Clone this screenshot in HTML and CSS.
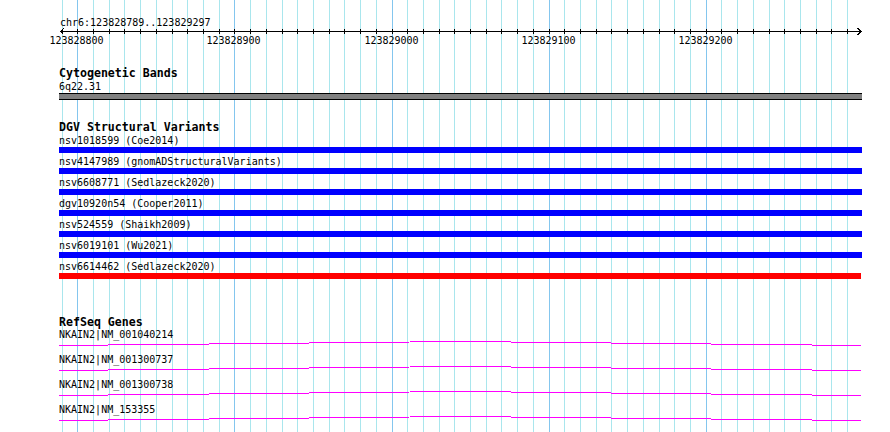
FILE: index.html
```html
<!DOCTYPE html>
<html lang="en">
<head>
  <meta charset="UTF-8">
  <title>chr6:123828789..123829297</title>
  <link rel="stylesheet" href="styles.css">
</head>
<body>
  <div class="view">
    <!-- Grid lines, filled in by the script below -->
    <svg class="grid" id="grid" width="890" height="432"></svg>

    <!-- Ruler -->
    <svg class="ruler" width="890" height="46">
      <text class="range" x="60" y="26">chr6:123828789..123829297</text>
      <line class="axis" x1="60" y1="31.5" x2="861" y2="31.5"/>
      <polyline class="axis" points="63.5,28.5 60.5,31.5 63.5,34.5"/>
      <polyline class="axis" points="857.5,28 861,31.5 857.5,35"/>
      <g id="ticks"></g>
      <text class="pos" x="76.5" y="44">123828800</text>
      <text class="pos" x="233.5" y="44">123828900</text>
      <text class="pos" x="391.5" y="44">123829000</text>
      <text class="pos" x="548.5" y="44">123829100</text>
      <text class="pos" x="705.5" y="44">123829200</text>
    </svg>

    <!-- Cytogenetic bands -->
    <section class="track">
      <h2 class="track-title">Cytogenetic Bands</h2>
      <div class="label">6q22.31</div>
      <div class="band"></div>
    </section>

    <!-- DGV -->
    <section class="track">
      <h2 class="track-title">DGV Structural Variants</h2>
      <div class="variant">
        <div class="label">nsv1018599 (Coe2014)</div>
        <div class="bar"></div>
      </div>
      <div class="variant">
        <div class="label">nsv4147989 (gnomADStructuralVariants)</div>
        <div class="bar"></div>
      </div>
      <div class="variant">
        <div class="label">nsv6608771 (Sedlazeck2020)</div>
        <div class="bar"></div>
      </div>
      <div class="variant">
        <div class="label">dgv10920n54 (Cooper2011)</div>
        <div class="bar"></div>
      </div>
      <div class="variant">
        <div class="label">nsv524559 (Shaikh2009)</div>
        <div class="bar"></div>
      </div>
      <div class="variant">
        <div class="label">nsv6019101 (Wu2021)</div>
        <div class="bar"></div>
      </div>
      <div class="variant">
        <div class="label">nsv6614462 (Sedlazeck2020)</div>
        <div class="bar loss"></div>
      </div>
    </section>

    <!-- RefSeq -->
    <section class="track genes">
      <h2 class="track-title">RefSeq Genes</h2>
      <div class="gene">
        <div class="label">NKAIN2|NM_001040214</div>
        <svg width="803" height="13"><polyline class="intron" points="0,4.5 401,0.5 802,4.5"/></svg>
      </div>
      <div class="gene">
        <div class="label">NKAIN2|NM_001300737</div>
        <svg width="803" height="13"><polyline class="intron" points="0,4.5 401,0.5 802,4.5"/></svg>
      </div>
      <div class="gene">
        <div class="label">NKAIN2|NM_001300738</div>
        <svg width="803" height="13"><polyline class="intron" points="0,4.5 401,0.5 802,4.5"/></svg>
      </div>
      <div class="gene">
        <div class="label">NKAIN2|NM_153355</div>
        <svg width="803" height="13"><polyline class="intron" points="0,4.5 401,0.5 802,4.5"/></svg>
      </div>
    </section>
  </div>

  <script>
    const NS = "http://www.w3.org/2000/svg";
    const grid = document.getElementById("grid");
    const ticks = document.getElementById("ticks");

    // one line every 10bp, a major one every 100bp
    const first = 77.35;
    const step = 15.708;

    for (let k = -1; k <= 49; k++) {
      const x = Math.round(first + step * k);

      const line = document.createElementNS(NS, "rect");
      line.setAttribute("x", x);
      line.setAttribute("y", 0);
      line.setAttribute("width", 1);
      line.setAttribute("height", 432);
      line.setAttribute("class", k % 10 === 0 ? "major" : "minor");
      grid.appendChild(line);

      const tick = document.createElementNS(NS, "rect");
      tick.setAttribute("x", x);
      tick.setAttribute("y", 29);
      tick.setAttribute("width", 1);
      tick.setAttribute("height", 5);
      tick.setAttribute("class", "tick");
      ticks.appendChild(tick);
    }
  </script>
</body>
</html>
```

FILE: styles.css
```css
html, body {
  margin: 0;
  padding: 0;
  background: #fff;
}

.view {
  position: relative;
  width: 890px;
  height: 432px;
  overflow: hidden;
  background: #fff;
  color: #000;
  font-family: "DejaVu Sans Mono", monospace;
}

.grid {
  position: absolute;
  top: 0;
  left: 0;
}

.grid .minor {
  fill: #a9e6ed;
}

.grid .major {
  fill: #84c6ee;
}

.ruler {
  position: relative;
  display: block;
}

.ruler text {
  font-family: "DejaVu Sans Mono", monospace;
  font-size: 10px;
  fill: #000;
}

.ruler .pos {
  text-anchor: middle;
}

.axis {
  stroke: #000;
  stroke-width: 1;
  fill: none;
  shape-rendering: crispEdges;
}

.tick {
  fill: #000;
}

.track {
  position: relative;
  padding-left: 59px;
  margin-top: 21px;
}

.track-title {
  margin: 0;
  font-size: 11.6px;
  line-height: 13px;
  font-weight: bold;
}

.label {
  font-size: 10px;
  line-height: 13px;
  white-space: nowrap;
}

.band {
  width: 803px;
  height: 5px;
  background: #808080;
  border-top: 1px solid #000;
  border-bottom: 1px solid #000;
}

.variant {
  padding-bottom: 2px;
}

.bar {
  width: 803px;
  height: 6px;
  background: #00f;
}

.bar.loss {
  width: 802px;
  background: #f00;
}

.genes {
  margin-top: 35px;
}

.gene .label {
  line-height: 12px;
}

.gene svg {
  display: block;
}

.intron {
  stroke: #f0f;
  stroke-width: 1;
  fill: none;
  shape-rendering: crispEdges;
}
```
